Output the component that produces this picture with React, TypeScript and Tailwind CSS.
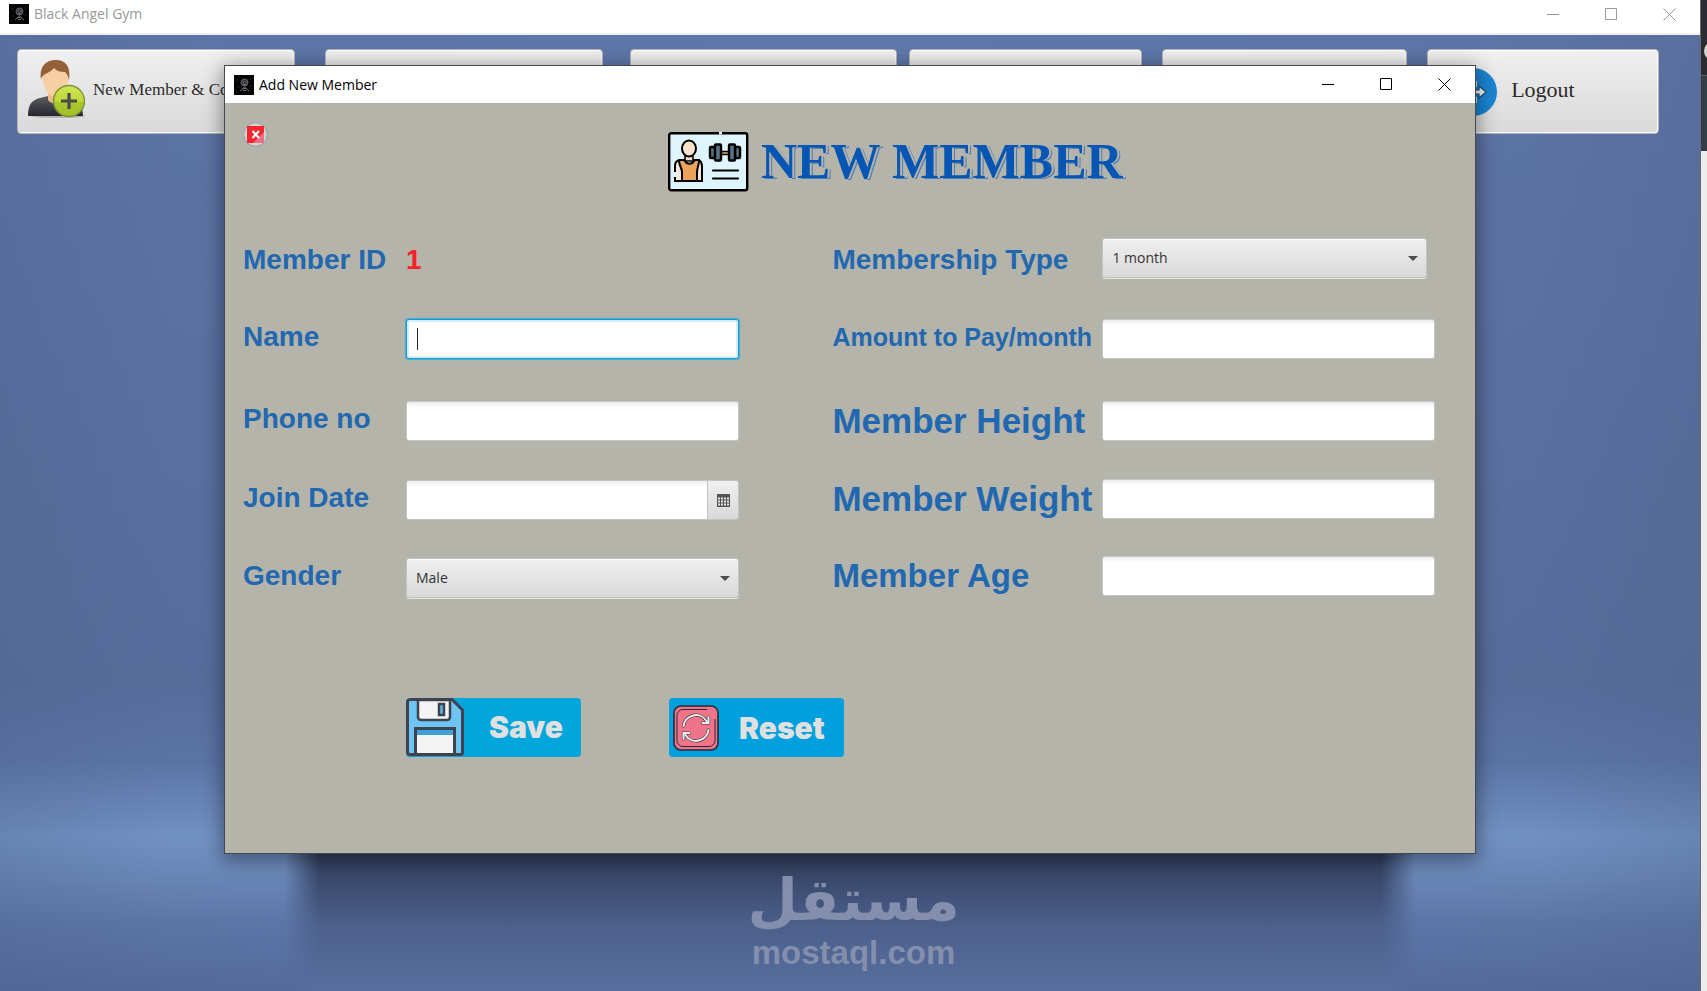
import { type FC, type ReactNode, useState } from "react";

const labelColor = "font-['Liberation_Sans',Arial,sans-serif] font-bold text-[#2268b0] whitespace-nowrap";

const inputStyle =
  "h-10 w-full rounded-[3px] border border-[#c6c6c3] bg-white bg-linear-to-b from-[#ededed] to-white to-15% px-[10px] text-[15px] text-[#333] outline-none";

const selectStyle =
  "h-10 w-full appearance-none rounded-[3px] border border-[#c3c3c0] bg-linear-to-b from-[#efefef] to-[#d9d9d9] px-[9px] text-sm text-[#333] shadow-[inset_0_1px_0_#fbfbfb,0_1px_0_#e6e6e4] outline-none";

const toolbarButton =
  "flex h-[85px] min-w-0 items-center overflow-hidden rounded-[4px] border border-[#b4b5b4] bg-linear-to-b from-[#f0f0f0] to-[#d9d9d9] font-['Goudy_Old_Style','Liberation_Serif',serif] text-[#2b2b2b] whitespace-nowrap shadow-[inset_0_1px_0_#fff,inset_-1px_-1px_0_#fafafa]";

const AppIcon: FC = () => (
  <svg width="20" height="20" viewBox="0 0 20 20" aria-hidden="true">
    <rect width="20" height="20" fill="#050505" />
    <circle cx="10.500" cy="7.500" r="3.500" fill="#35353a" stroke="#77777c" strokeWidth=".8" />
    <path d="M9 7h1M11.500 7h1M9.500 9.500h2" stroke="#a5a5a8" strokeWidth=".8" />
    <path d="M6 16l3-2.500 1.500-2 1.500 2 3 2.500M8 13.500h5M9 15.500h3" stroke="#6b6b70" fill="none" />
    <path d="M3 5h1M16 4h1M4 12h1M16 11h1M2 17h1" stroke="#3d3d42" />
  </svg>
);

const MemberIcon: FC = () => (
  <svg className="mb-1" width="57" height="60" viewBox="0 0 57 60" aria-hidden="true">
    <defs>
      <linearGradient id="suit" x1="0" y1="0" x2="0" y2="1">
        <stop offset="0" stopColor="#5b5d63" />
        <stop offset="1" stopColor="#25272d" />
      </linearGradient>
      <linearGradient id="plus" x1="0" y1="0" x2="0" y2="1">
        <stop offset="0" stopColor="#cfe35a" />
        <stop offset=".5" stopColor="#bfd937" />
        <stop offset=".55" stopColor="#a8c82b" />
        <stop offset="1" stopColor="#a3bd2c" />
      </linearGradient>
    </defs>
    <ellipse cx="30" cy="56" rx="27" ry="2" fill="#0003" />
    <path d="M0 56c0-12 4-16 12-18l8-2h12l10 3c9 2 13 8 13 17z" fill="url(#suit)" />
    <path d="M20 32h14v8c-3 5-10 5-14 0z" fill="#e9bd92" />
    <path d="M14 12c0-8 6-11 14-11s13 4 13 13c0 12-5 23-13 23S14 26 14 12z" fill="#f6cfa3" />
    <path d="M13 20C11 7 17 0 28 0c10 0 15 7 13 20-1-4-2-6-4-8-5 0-8-1-11-4-3 4-8 5-10 7-2 1-3 3-3 5z" fill="#946037" />
    <circle cx="41" cy="41" r="15.500" fill="url(#plus)" stroke="#7e9330" strokeWidth="1.500" />
    <path d="M41 33v16M33 41h16" stroke="#4a4a4a" strokeWidth="3.200" />
  </svg>
);

const LogoutIcon: FC = () => (
  <svg width="48" height="48" viewBox="0 0 48 48" aria-hidden="true">
    <circle cx="24" cy="24" r="24" fill="#1a84d2" />
    <path d="M14 13h14v6h-3v-3h-8v16h8v-3h3v6H14z" fill="#cbd6cb" />
    <path d="M21 22h9v-4l7 6-7 6v-4h-9z" fill="#f3f3f3" stroke="#1d4f7c" strokeWidth="1.200" />
  </svg>
);

const CardIcon: FC = () => (
  <svg width="81" height="60" viewBox="0 0 81 60" aria-hidden="true">
    <rect x="1.200" y="1.200" width="78" height="57" rx="2" fill="#dff5fd" stroke="#000" strokeWidth="2.400" />
    <path d="M51 1.200h3" stroke="#dff5fd" strokeWidth="2.600" />
    <path d="M7 49V34c0-5 3-6 6-6h16c4 0 5 3 5 7v14z" fill="#f6e7dc" stroke="#000" strokeWidth="2" />
    <path d="M17 24h8v5h-8z" fill="#f8dcc4" stroke="#000" strokeWidth="1.500" />
    <path d="M11 28h5c3 5 8 5 11 0h4c0 6-2 8-2 12v9H14v-9c0-4-3-6-3-12z" fill="#eaa35c" stroke="#000" strokeWidth="2" />
    <path d="M7 40v5" stroke="#dff5fd" strokeWidth="2.400" />
    <ellipse cx="21" cy="16.500" rx="7" ry="8" fill="#fae2cc" stroke="#000" strokeWidth="2" />
    <path d="M53 19.500h10v3H53z" fill="#eaa35c" stroke="#000" strokeWidth="1.500" />
    <g fill="#5c7287" stroke="#000" strokeWidth="2.400">
      <rect x="42" y="15" width="5" height="11" rx="1" />
      <rect x="67" y="15" width="5" height="11" rx="1" />
      <rect x="47" y="12.500" width="6" height="16" rx="1" />
      <rect x="61" y="12.500" width="6" height="16" rx="1" />
    </g>
    <path d="M45 38.500h25M45 46.500h25" stroke="#000" strokeWidth="2.200" strokeLinecap="round" />
  </svg>
);

const CloseIcon: FC = () => (
  <svg width="25" height="25" viewBox="0 0 25 25" aria-hidden="true">
    <circle cx="12.500" cy="12.500" r="11.800" fill="#d2d2d2" stroke="#9c9a9a" />
    <rect x="4" y="4" width="17" height="17" fill="#ee7086" />
    <path d="M4 4h17v6L10 21H4z" fill="#f5242f" />
    <path d="M9.500 9l6.500 7M16 9l-6.500 7" stroke="#fff" strokeWidth="2.200" />
  </svg>
);

const FloppyIcon: FC = () => (
  <svg width="58" height="58" viewBox="0 0 58 58" aria-hidden="true">
    <path d="M4 1.500h42L56.500 12v42.500a2 2 0 0 1-2 2H4a2.500 2.500 0 0 1-2.500-2.500V4A2.500 2.500 0 0 1 4 1.500z" fill="#6ec5f4" stroke="#3e4350" strokeWidth="3" />
    <path d="M12 2v17a3 3 0 0 0 3 3h26a3 3 0 0 0 3-3V2z" fill="#f3f3f3" stroke="#3e4350" strokeWidth="2.500" />
    <rect x="33" y="6" width="5" height="11" fill="#5fb6e8" stroke="#3e4350" strokeWidth="2.500" />
    <rect x="9.500" y="30.500" width="39" height="26" fill="#f3f3f3" stroke="#3e4350" strokeWidth="3" />
    <path d="M11 32h36v5H11z" fill="#3da0d6" />
  </svg>
);

const ResetIcon: FC = () => (
  <svg width="46" height="46" viewBox="0 0 46 46" aria-hidden="true">
    <rect x="1" y="1" width="44" height="44" rx="7" fill="#ef7489" stroke="#2a2a35" strokeWidth="1.600" />
    <path d="M34 4.500H10A6 6 0 0 0 4 11v24a6 6 0 0 0 6 6.500h26a6 6 0 0 0 6-6V14" fill="none" stroke="#2a2a35" strokeWidth="1" />
    <g fill="none" strokeLinecap="round">
      <path d="M10.500 21a12.500 12.500 0 0 1 23-5M35.500 25a12.500 12.500 0 0 1-23 5M35.500 12v6h-6M10.500 34v-6h6" stroke="#3a3a3f" strokeWidth="3.200" />
      <path d="M10.500 21a12.500 12.500 0 0 1 23-5M35.500 25a12.500 12.500 0 0 1-23 5M35.500 12v6h-6M10.500 34v-6h6" stroke="#f0eeee" strokeWidth="2" />
    </g>
  </svg>
);

const CalendarIcon: FC = () => (
  <svg width="13" height="13" viewBox="0 0 13 13" aria-hidden="true">
    <path d="M0 0h13v13H0z" fill="#555" />
    <path d="M1 4.500h11M1 7.500h11M1 10.500h11" stroke="#e6e6e6" strokeWidth="2" strokeDasharray="2 1" />
  </svg>
);

const WindowControls: FC = () => (
  <div className="flex self-stretch pr-[2px]">
    <button type="button" aria-label="Minimize" className="flex w-[58px] items-center justify-center">
      <svg width="13" height="13" stroke="currentColor"><path d="M0 6.500h12" /></svg>
    </button>
    <button type="button" aria-label="Maximize" className="flex w-[58px] items-center justify-center">
      <svg width="13" height="13" fill="none" stroke="currentColor"><path d="M.5.5h11v11H.5z" /></svg>
    </button>
    <button type="button" aria-label="Close" className="flex w-[58px] items-center justify-center">
      <svg width="13" height="13" stroke="currentColor"><path d="M.5.5l12 12M12.500.5l-12 12" /></svg>
    </button>
  </div>
);

const Select: FC<{ id: string; options: string[] }> = ({ id, options }) => (
  <div className="relative">
    <select id={id} className={selectStyle}>
      {options.map((option) => (
        <option key={option}>{option}</option>
      ))}
    </select>
    <svg className="pointer-events-none absolute top-[18px] right-[9px]" width="10" height="5" viewBox="0 0 10 5">
      <path d="M0 0h10L5 5z" fill="#4b4b4b" />
    </svg>
  </div>
);

type FieldProps = { id: string; label: string; size?: string; children: ReactNode };

const LeftField: FC<FieldProps> = ({ id, label, children }) => (
  <div className="grid grid-cols-[163px_1fr]">
    <label htmlFor={id} className={`${labelColor} h-10 text-[28px] leading-9`}>
      {label}
    </label>
    <div>{children}</div>
  </div>
);

const RightField: FC<FieldProps> = ({ id, label, size, children }) => (
  <div className="grid grid-cols-[270px_1fr]">
    <label htmlFor={id} className={`${labelColor} h-10 ${size}`}>
      {label}
    </label>
    <div>{children}</div>
  </div>
);

const Toolbar: FC = () => (
  <nav className="relative flex pt-[14px] pr-[41px] pl-[17px]">
    <button type="button" className={`${toolbarButton} mr-[30px] flex-[1_1_278px] gap-2 pl-[10px] text-[17px]`}>
      <MemberIcon />
      <span className="pb-1">New Member &amp; Co</span>
    </button>
    <button type="button" aria-label="Members" className={`${toolbarButton} mr-[27px] flex-[1_1_278px]`} />
    <button type="button" aria-label="Coaches" className={`${toolbarButton} mr-3 flex-[1_1_268px]`} />
    <button type="button" aria-label="Payments" className={`${toolbarButton} mr-5 flex-[1_1_233px]`} />
    <button type="button" aria-label="Reports" className={`${toolbarButton} mr-5 flex-[1_1_245px]`} />
    <button type="button" className={`${toolbarButton} flex-[1_1_232px] gap-[14px] pl-[21px] text-[22px]`}>
      <LogoutIcon />
      <span className="pb-1">Logout</span>
    </button>
  </nav>
);

const NewMemberForm: FC = () => {
  const [name, setName] = useState("");
  const [date, setDate] = useState("");

  return (
    <form className="flex-1 bg-[#b4b4ab] pr-10 pl-[18px]" onSubmit={(e) => e.preventDefault()}>
      <div className="flex h-[135px] items-start">
        <button type="button" aria-label="Close form" className="mt-[19px]">
          <CloseIcon />
        </button>
        <div className="mt-[29px] ml-[400px] flex items-start gap-3">
          <CardIcon />
          <h1 className="font-[Algerian,'Liberation_Serif',serif] text-[50px] leading-[58px] font-bold whitespace-nowrap text-[#0856b4] [text-shadow:2px_0_0_#b4b4ab,3px_1px_0_#4f7db5]">
            NEW MEMBER
          </h1>
        </div>
      </div>

      <div className="grid grid-cols-[496fr_602fr] gap-x-[93px]">
        <div className="grid grid-rows-[81px_82px_79px_78px_40px]">
          <div className="grid grid-cols-[163px_1fr]">
            <span className={`${labelColor} text-[28px] leading-[44px]`}>Member ID</span>
            <output className="font-['Liberation_Sans',Arial,sans-serif] text-[28px] leading-[44px] font-bold text-[#fa2027]">1</output>
          </div>
          <LeftField id="name" label="Name">
            <div className="relative">
              <input
                id="name"
                value={name}
                onChange={(e) => setName(e.target.value)}
                className="h-10 w-full rounded-[3px] border border-[#0a9bd8] bg-white px-[10px] text-[15px] shadow-[0_0_1px_1px_#4aa9d0,inset_0_0_0_2px_#d3eefa] outline-none"
              />
              {name === "" && <span className="pointer-events-none absolute top-[9px] left-[11px] h-[22px] w-px bg-[#222]" />}
            </div>
          </LeftField>
          <LeftField id="phone" label="Phone no">
            <input id="phone" type="tel" className={inputStyle} />
          </LeftField>
          <LeftField id="join" label="Join Date">
            <div className="flex h-10 overflow-hidden rounded-[3px] border border-[#c3c3c0]">
              <input
                id="join"
                value={date}
                onChange={(e) => setDate(e.target.value)}
                className="min-w-0 flex-1 bg-white bg-linear-to-b from-[#ededed] to-white to-15% px-[10px] text-[15px] outline-none"
              />
              <button
                type="button"
                aria-label="Pick date"
                className="flex w-[31px] items-center justify-center border-l border-[#c3c3c0] bg-linear-to-b from-[#f0f0f0] to-[#d9d9d9]"
              >
                <CalendarIcon />
              </button>
            </div>
          </LeftField>
          <LeftField id="gender" label="Gender">
            <Select id="gender" options={["Male", "Female"]} />
          </LeftField>
        </div>

        <div className="grid grid-rows-[81px_82px_78px_77px_42px]">
          <RightField id="type" label="Membership Type" size="text-[28px] leading-[44px]">
            <div className="pr-2">
              <Select id="type" options={["1 month", "3 months", "6 months", "1 year"]} />
            </div>
          </RightField>
          <RightField id="amount" label="Amount to Pay/month" size="text-[25px] leading-9">
            <input id="amount" className={inputStyle} />
          </RightField>
          <RightField id="height" label="Member Height" size="text-[35px] leading-10">
            <input id="height" className={inputStyle} />
          </RightField>
          <RightField id="weight" label="Member Weight" size="text-[35px] leading-10">
            <input id="weight" className={inputStyle} />
          </RightField>
          <RightField id="age" label="Member Age" size="text-[33px] leading-10">
            <input id="age" className={inputStyle} />
          </RightField>
        </div>
      </div>

      <div className="mt-[100px] ml-[163px] flex gap-[88px] font-['Arial_Black',Inter,sans-serif] text-[30px] font-black text-[#e0e0e0]">
        <button type="submit" className="flex h-[59px] w-[175px] items-start gap-[25px] overflow-hidden rounded-[4px] bg-[#01a6dd] leading-[58px]">
          <FloppyIcon />
          Save
        </button>
        <button type="reset" className="flex h-[59px] w-[175px] items-center gap-5 rounded-[4px] bg-[#00a0de] pl-1 leading-[58px]">
          <ResetIcon />
          Reset
        </button>
      </div>
    </form>
  );
};

const App: FC = () => {
  return (
    <div className="flex min-h-screen font-['Segoe_UI','Open_Sans',sans-serif]">
      <div className="relative flex min-w-0 flex-1 flex-col">
        <header className="flex h-[35px] items-start border-b-2 border-[#f0f0f0] bg-white text-[#999]">
          <div className="flex flex-1 items-center gap-[5px] pl-[9px] text-[14px] leading-7">
            <AppIcon />
            Black Angel Gym
          </div>
          <div className="flex h-7">
            <WindowControls />
          </div>
        </header>

        <main className="relative flex-1 overflow-hidden bg-linear-to-b from-[#5c74a6] from-0% via-[#566c9b] via-70% to-[#566c9b] to-100%">
          {/* studio backdrop: floor glow, side shading and the shadow under the dialog */}
          <div className="absolute inset-0 bg-[linear-gradient(to_bottom,transparent_68%,#5f7bb080_76%,#6d8bbdd9_81%,#7291c3_84%,#6c8abbd9_88%,#5f7aad99_93%,#53699b_100%)]" />
          <div className="absolute inset-0 bg-[linear-gradient(to_right,#4a5f8a40,transparent_10%,#6a88c030_50%,transparent_90%,#4a5f8a40)]" />
          <div className="absolute inset-x-[285px] bottom-0 h-[150px] bg-linear-to-b from-[#2c3852] via-[#4b5f8b] via-55% to-[#586f9f] [mask-image:linear-gradient(to_right,transparent,#000_3%,#000_97%,transparent)]" />
          <Toolbar />
          <div className="absolute inset-x-0 bottom-[22px] flex flex-col items-center pl-[7px] font-bold text-[#848fad]">
            <span lang="ar" dir="rtl" className="font-['DejaVu_Sans',sans-serif] text-[58px] leading-[74px]">مستقل</span>
            <span className="font-['Liberation_Sans',Arial,sans-serif] text-[33px] leading-8">mostaql.com</span>
          </div>
        </main>

        <section
          role="dialog"
          aria-label="Add New Member"
          className="absolute top-[65px] right-[224px] bottom-[137px] left-[224px] flex flex-col border border-[#45484f] bg-white shadow-[0_4px_18px_2px_#0006]"
        >
          <div className="flex h-[37px] items-center">
            <div className="flex flex-1 items-center gap-[5px] pl-[9px] text-[14px] text-black">
              <AppIcon />
              Add New Member
            </div>
            <WindowControls />
          </div>
          <NewMemberForm />
        </section>
      </div>

      <aside className="flex w-[7px] flex-col border-l border-[#6b6b6b] bg-[#ececec]">
        <div className="flex h-[75px] flex-col justify-center overflow-hidden bg-[#2b2b31] pt-[27px]">
          <span className="ml-[3px] h-5 w-5 rounded-full bg-[#d5d5d5]" />
        </div>
        <div className="h-[76px] border-t border-[#5a5f69] bg-[#353c49]" />
      </aside>
    </div>
  );
};

export default App;
